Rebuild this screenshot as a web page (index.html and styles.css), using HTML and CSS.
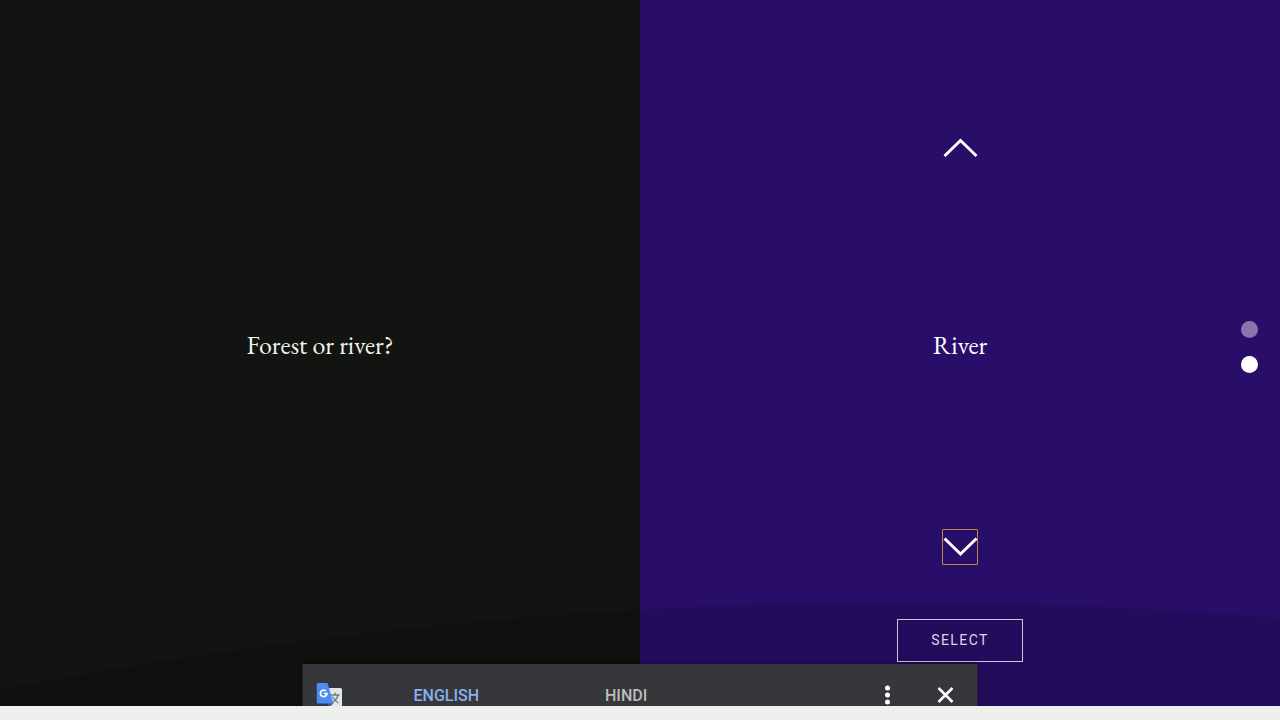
FILE: index.html
```html
<!DOCTYPE html>
<html lang="en">
<head>
<meta charset="utf-8">
<title>Forest or river?</title>
<meta name="viewport" content="width=device-width, initial-scale=1">
<link rel="stylesheet" href="styles.css">
</head>
<body>
<main class="stage">
  <section class="question"><h1 class="phrase">Forest or river?</h1></section>
  <section class="answer">
    <button class="arrow" type="button" aria-label="Previous answer">
      <svg viewBox="0 0 36 36"><path d="M2.500 27 18.500 11.500 34.500 27"/></svg>
    </button>
    <p class="phrase">River</p>
    <button class="arrow arrow-focused" type="button" aria-label="Next answer">
      <svg viewBox="0 0 36 36"><path d="M2.500 9.500 18.500 25 34.500 9.500"/></svg>
    </button>
    <button class="select" type="button">SELECT</button>
  </section>
  <svg class="hill" viewBox="0 0 1280 104" preserveAspectRatio="none" aria-hidden="true"><path d="M0 88Q640-37 1280 16V104H0Z"/></svg>
  <nav class="dots" aria-label="Answers">
    <button class="dot" type="button" aria-label="Forest"></button>
    <button class="dot dot-current" type="button" aria-label="River"></button>
  </nav>
  <div class="translate" role="toolbar" aria-label="Translate">
    <svg class="logo" viewBox="0 0 26 26" aria-hidden="true">
      <path fill="#e2e4e6" d="M10 5h14a1.500 1.500 0 0 1 1.500 1.500V26H13z"/>
      <path fill="none" stroke="#6d7c80" stroke-width="1.300" d="M14 12h9M18.500 9.500V12M21.500 12c-.8 3.500-3.500 6.500-6.500 8M16 13.500c1 2.500 3.500 5 6 6.500"/>
      <path fill="#3f51b5" d="M11.500 20h5.500l-3.500 4z"/>
      <path fill="#4c8bf1" d="M1.500 0H11l6 20.500H1.500A1.500 1.500 0 0 1 0 19V1.500A1.500 1.500 0 0 1 1.500 0z"/>
      <path fill="none" stroke="#fff" stroke-width="1.700" d="M9.500 8A3.300 3.300 0 1 0 10.500 10.500H7.300"/>
    </svg>
    <button class="language language-current" type="button">ENGLISH</button>
    <button class="language" type="button">HINDI</button>
    <button class="tool tool-menu" type="button" aria-label="Options">
      <svg viewBox="0 0 24 24"><circle cx="12" cy="5" r="2.500"/><circle cx="12" cy="12" r="2.500"/><circle cx="12" cy="19" r="2.500"/></svg>
    </button>
    <button class="tool" type="button" aria-label="Close">
      <svg viewBox="0 0 24 24"><path d="M5 5 19 19M19 5 5 19"/></svg>
    </button>
  </div>
</main>
<footer class="strip"></footer>
</body>
</html>
```
FILE: styles.css
```css
* { box-sizing: border-box; }

body {
  margin: 0;
  min-height: 100vh;
  display: flex;
  flex-direction: column;
  background: #eef0ed;
  font-family: Roboto, "Liberation Sans", sans-serif;
}

button {
  margin: 0;
  padding: 0;
  border: 0;
  background: none;
  color: inherit;
  font: inherit;
  cursor: pointer;
}

svg { display: block; }

.stage {
  position: relative;
  flex: 1;
  display: grid;
  grid-template-columns: 1fr 1fr;
  overflow: hidden;
}

.question {
  display: flex;
  align-items: center;
  justify-content: center;
  padding-bottom: 16px;
  background: #111410;
  color: #f1f2ed;
}

.answer {
  display: flex;
  flex-direction: column;
  align-items: center;
  padding: 129px 0 44px;
  background: #290e69;
  color: #fff;
}

.phrase {
  margin: 0;
  font: 400 26px/32px "EB Garamond", "Liberation Serif", serif;
}

.answer .phrase {
  margin: auto 0;
  padding-bottom: 4px;
}

.arrow {
  width: 36px;
  height: 36px;
}

.arrow path {
  fill: none;
  stroke: #fff;
  stroke-width: 3;
}

.arrow-focused {
  outline: 1px solid #c68349;
  outline-offset: -1px;
  border-radius: 1px;
}

.select {
  position: relative;
  z-index: 1;
  margin-top: 54px;
  padding: 0 33px;
  border: 1px solid #cfc4df;
  color: #ddd5e5;
  font-size: 14px;
  line-height: 41px;
  letter-spacing: 0.1em;
}

.hill {
  position: absolute;
  bottom: 0;
  left: 0;
  width: 100%;
  height: 104px;
  fill: rgba(0, 0, 0, 0.12);
  pointer-events: none;
}

.dots {
  position: absolute;
  top: 0;
  right: 22px;
  bottom: 12px;
  display: flex;
  flex-direction: column;
  justify-content: center;
  gap: 18px;
}

.dot {
  width: 17px;
  height: 17px;
  border-radius: 50%;
  background: #8974ad;
}

.dot-current { background: #fff; }

.translate {
  position: absolute;
  z-index: 2;
  bottom: 0;
  left: 50%;
  width: 675px;
  max-width: 100%;
  height: 42px;
  transform: translateX(-50%);
  display: flex;
  align-items: flex-start;
  padding: 19px 20px 0 14px;
  background: #36373a;
  box-shadow: 0 0 5px rgba(0, 0, 0, 0.5);
}

.logo {
  width: 26px;
  height: 26px;
  margin-right: 71px;
}

.language {
  margin-right: 126px;
  color: #bdbdbd;
  font-size: 16px;
  font-weight: 500;
  line-height: 26px;
}

.language-current { color: #8ab0ed; }

.tool {
  width: 24px;
  height: 24px;
}

.tool svg {
  fill: #fff;
  stroke: #fff;
}

.tool circle { stroke: none; }

.tool path { stroke-width: 2.5; }

.tool-menu {
  margin-left: auto;
  margin-right: 34px;
}

.strip { height: 14px; }
```
